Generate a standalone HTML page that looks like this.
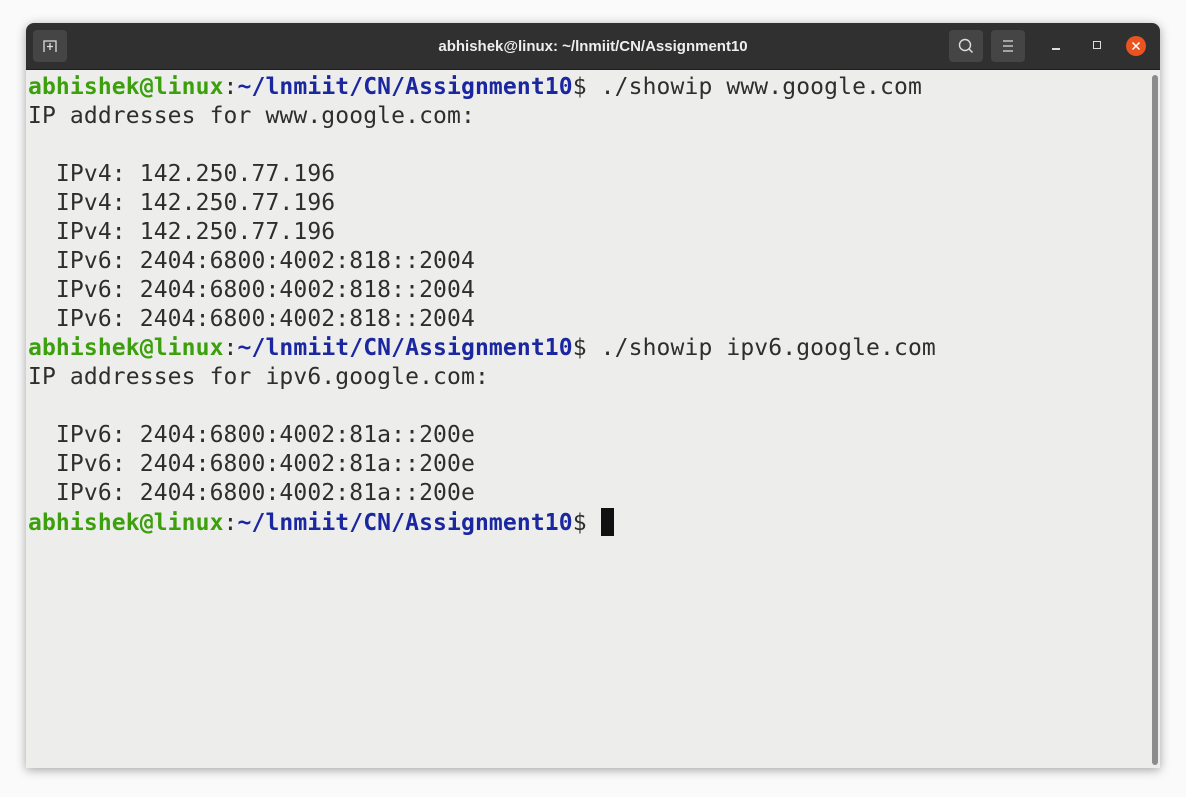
<!DOCTYPE html>
<html><head><style>
html,body{margin:0;padding:0;width:1186px;height:797px;background:#fafafa;overflow:hidden;}
.win{position:absolute;left:26px;top:23px;width:1134px;height:745px;background:#ededec;border-radius:8px 8px 0 0;box-shadow:0 2px 10px rgba(0,0,0,.35);overflow:hidden;}
.tb{position:absolute;left:0;top:0;width:1134px;height:46px;background:#303030;border-bottom:1px solid #1e1e1e;}
.title{position:absolute;left:0;width:100%;top:15px;text-align:center;color:#eee;font:bold 15px "Liberation Sans",sans-serif;}
.btn{position:absolute;top:7px;width:34px;height:32px;background:#454545;border-radius:4px;}
.term{position:absolute;left:2px;top:50px;font-family:"DejaVu Sans Mono",monospace;font-size:23px;letter-spacing:0.12px;line-height:29px;color:#2e2e2e;white-space:pre;}
.g{color:#3ba00c;font-weight:bold}.b{color:#1a27a0;font-weight:bold}
.cur{display:inline-block;width:13px;height:28px;background:#111;vertical-align:-6px;}
.sb{position:absolute;left:1126px;top:52px;width:6px;height:690px;background:#8c8c8c;border-radius:3px;}
</style></head><body>
<div class="win">
<div class="tb">
<div class="btn" style="left:7px"><svg width="34" height="32"><path d="M11 22V11h12v11M17 13v7M14 16.5h6" stroke="#ddd" stroke-width="1.3" fill="none"/></svg></div>
<div class="title">abhishek@linux: ~/lnmiit/CN/Assignment10</div>
<div class="btn" style="left:923px"><svg width="34" height="32"><circle cx="16" cy="15" r="5.5" stroke="#ddd" stroke-width="1.4" fill="none"/><path d="M20 19l3.5 3.5" stroke="#ddd" stroke-width="1.5"/></svg></div>
<div class="btn" style="left:965px"><svg width="34" height="32"><path d="M12 11h10M12 16h10M12 21h10" stroke="#ddd" stroke-width="1.3"/></svg></div>
<div style="position:absolute;left:1026px;top:25px;width:8px;height:1.5px;background:#ddd"></div>
<div style="position:absolute;left:1067px;top:18px;width:6px;height:6px;border:1.4px solid #ddd"></div>
<div style="position:absolute;left:1100px;top:13px;width:20px;height:20px;border-radius:50%;background:#e95420"><svg width="20" height="20"><path d="M6.5 6.5l7 7M13.5 6.5l-7 7" stroke="#fff" stroke-width="1.5"/></svg></div>
</div>
<div class="term"><span class="g">abhishek@linux</span>:<span class="b">~/lnmiit/CN/Assignment10</span>$ ./showip www.google.com
IP addresses for www.google.com:

  IPv4: 142.250.77.196
  IPv4: 142.250.77.196
  IPv4: 142.250.77.196
  IPv6: 2404:6800:4002:818::2004
  IPv6: 2404:6800:4002:818::2004
  IPv6: 2404:6800:4002:818::2004
<span class="g">abhishek@linux</span>:<span class="b">~/lnmiit/CN/Assignment10</span>$ ./showip ipv6.google.com
IP addresses for ipv6.google.com:

  IPv6: 2404:6800:4002:81a::200e
  IPv6: 2404:6800:4002:81a::200e
  IPv6: 2404:6800:4002:81a::200e
<span class="g">abhishek@linux</span>:<span class="b">~/lnmiit/CN/Assignment10</span>$ <span class="cur"></span></div>
<div class="sb"></div>
</div>
</body></html>
